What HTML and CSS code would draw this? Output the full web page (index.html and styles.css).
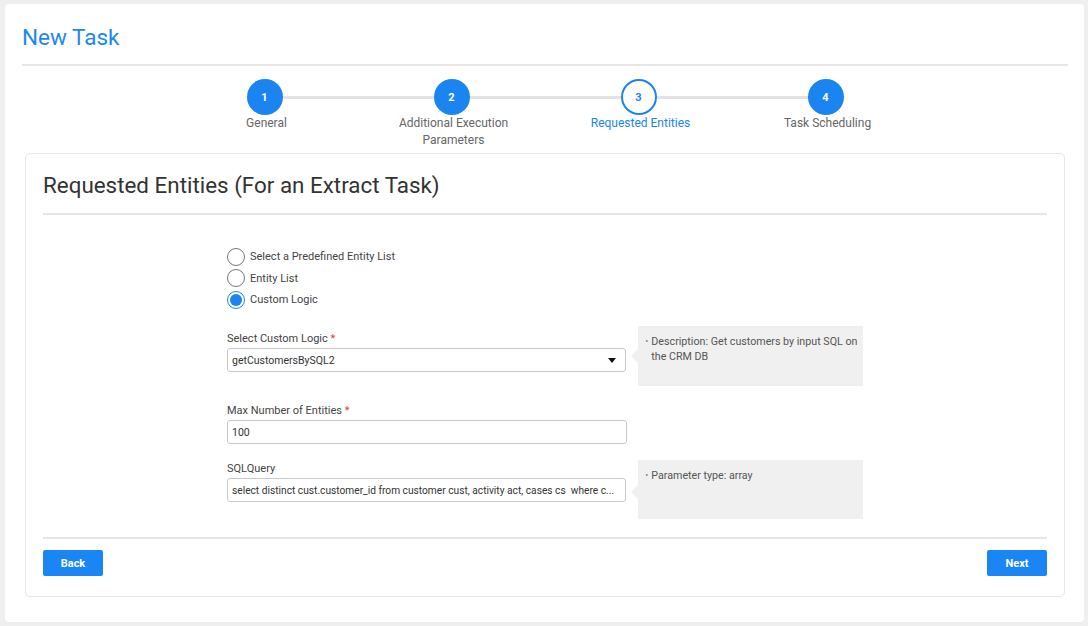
FILE: index.html
```html
<!DOCTYPE html>
<html lang="en">
<head>
<meta charset="utf-8">
<title>New Task</title>
<link rel="stylesheet" href="styles.css">
</head>
<body>
<div class="page">
  <h1 class="page-title">New Task</h1>
  <div class="rule"></div>

  <div class="stepper">
    <div class="step done">
      <div class="step-circle">1</div>
      <div class="step-label">General</div>
    </div>
    <div class="step done">
      <div class="step-circle">2</div>
      <div class="step-label">Additional Execution Parameters</div>
    </div>
    <div class="step current">
      <div class="step-circle">3</div>
      <div class="step-label">Requested Entities</div>
    </div>
    <div class="step done">
      <div class="step-circle">4</div>
      <div class="step-label">Task Scheduling</div>
    </div>
  </div>

  <div class="card">
    <h2 class="card-title">Requested Entities (For an Extract Task)</h2>
    <div class="rule"></div>

    <div class="form">
      <div class="radios">
        <div class="radio-row"><span class="radio"></span><span>Select a Predefined Entity List</span></div>
        <div class="radio-row"><span class="radio"></span><span>Entity List</span></div>
        <div class="radio-row"><span class="radio checked"></span><span>Custom Logic</span></div>
      </div>

      <div class="field-row">
        <div class="field">
          <div class="field-label">Select Custom Logic <span class="req">*</span></div>
          <div class="input select">
            <span class="input-text">getCustomersBySQL2</span>
            <svg class="caret" width="8" height="5" viewBox="0 0 8 5"><path d="M0 0H8L4 5Z" fill="#111"/></svg>
          </div>
        </div>
        <div class="hint">
          <ul><li>Description: Get customers by input SQL on the CRM DB</li></ul>
        </div>
      </div>

      <div class="field-row">
        <div class="field">
          <div class="field-label">Max Number of Entities <span class="req">*</span></div>
          <div class="input"><span class="input-text">100</span></div>
        </div>
      </div>

      <div class="field-row">
        <div class="field">
          <div class="field-label">SQLQuery</div>
          <div class="input input-sql"><span class="input-text">select distinct cust.customer_id from customer cust, activity act, cases cs&nbsp; where c...</span></div>
        </div>
        <div class="hint hint-low">
          <ul><li>Parameter type: array</li></ul>
        </div>
      </div>
    </div>

    <div class="rule rule-bottom"></div>
    <div class="actions">
      <button class="btn">Back</button>
      <button class="btn">Next</button>
    </div>
  </div>
</div>
</body>
</html>
```
FILE: styles.css
```css
* { box-sizing: border-box; }

html, body {
  margin: 0;
  background: #efefef;
}

body {
  padding: 4px 4px 4px 5px;
  font-family: Roboto, "Liberation Sans", Arial, sans-serif;
  color: #444;
}

.page {
  background: #fff;
  border-radius: 4px;
  padding: 18px 16px 25px 17px;
}

.page-title {
  margin: 0;
  font-size: 22.5px;
  line-height: 30px;
  font-weight: 400;
  color: #1e87ee;
}

.rule {
  height: 2px;
  background: #e6e6e6;
  margin-top: 12px;
}

/* Stepper */
.stepper {
  display: flex;
  justify-content: center;
  margin-top: 13px;
}

.step {
  position: relative;
  width: 187px;
  display: flex;
  flex-direction: column;
  align-items: center;
}

.step + .step::before {
  content: "";
  position: absolute;
  top: 17px;
  left: calc(-50% + 18px);
  right: calc(50% + 18px);
  height: 3px;
  background: #e3e3e3;
}

.step-circle {
  width: 36px;
  height: 36px;
  border-radius: 50%;
  background: #1a85f0;
  color: #fff;
  font-size: 11px;
  font-weight: 700;
  display: flex;
  align-items: center;
  justify-content: center;
}

.step.current .step-circle {
  background: #fff;
  border: 2px solid #1a85f0;
  color: #1a85f0;
}

.step-label {
  max-width: 130px;
  margin-left: 4px;
  text-align: center;
  font-size: 12px;
  line-height: 17px;
  color: #666;
}

.step.current .step-label {
  color: #1a85f0;
}

/* Card */
.card {
  margin: 4px 3px 0 3px;
  border: 1px solid #e6e6e6;
  border-radius: 5px;
  padding: 17px 17px 20px 17px;
}

.card-title {
  margin: 0;
  font-size: 22.4px;
  line-height: 28px;
  font-weight: 400;
  color: #333;
}

.card .rule {
  margin-top: 14px;
}

.form {
  width: 636px;
  margin: 31px auto 0;
}

.radios {
  margin-bottom: 15.5px;
}

.radio-row {
  display: flex;
  align-items: center;
  gap: 5px;
  height: 21.5px;
  font-size: 11px;
  color: #444;
}

.radio {
  width: 18px;
  height: 18px;
  border: 1px solid #777;
  border-radius: 50%;
  display: flex;
  align-items: center;
  justify-content: center;
}

.radio.checked {
  border-color: #1a85f0;
}

.radio.checked::after {
  content: "";
  width: 12px;
  height: 12px;
  border-radius: 50%;
  background: #1a85f0;
}

.field-row {
  display: flex;
  align-items: flex-start;
  gap: 12px;
  margin-bottom: 12px;
}

.field {
  width: 400px;
}

.field-label {
  font-size: 11px;
  padding-top: 3px;
  line-height: 19px;
  color: #444;
}

.req {
  color: #e53935;
}

.input {
  height: 24px;
  border: 1px solid #c9c9c9;
  border-radius: 3px;
  padding: 0 4px;
  display: flex;
  align-items: center;
  font-size: 10.5px;
  color: #333;
}

.input-sql {
  font-size: 10.2px;
  padding-right: 2px;
}

.input-text {
  flex: 1;
  min-width: 0;
  white-space: nowrap;
}

.select .caret {
  margin: 0 5px 0 8px;
  flex: none;
}

.hint {
  position: relative;
  width: 225px;
  height: 60px;
  background: #f0f0f0;
  padding: 8px 2px 0 7px;
  font-size: 10.7px;
  line-height: 15px;
  color: #555;
}

.hint::before {
  content: "";
  position: absolute;
  left: -7px;
  top: 23px;
  border-top: 7px solid transparent;
  border-bottom: 7px solid transparent;
  border-right: 7px solid #f0f0f0;
}

.hint-low {
  margin-top: 4px;
  height: 59px;
}

.hint-low::before {
  top: 25px;
}

.hint ul {
  margin: 0;
  padding: 0;
  list-style: none;
}

.hint li {
  position: relative;
  padding-left: 6px;
}

.hint li::before {
  content: "\2022";
  position: absolute;
  left: 0;
  top: 0;
  color: #888;
  font-size: 9px;
}

.card .rule-bottom {
  margin-top: 18px;
}

.actions {
  display: flex;
  justify-content: space-between;
  margin-top: 11px;
}

.btn {
  width: 60px;
  height: 26px;
  border: none;
  border-radius: 2px;
  background: #1a85f5;
  color: #fff;
  font-family: Roboto, "Liberation Sans", Arial, sans-serif;
  font-size: 11px;
  font-weight: 700;
  padding: 0;
}
```
